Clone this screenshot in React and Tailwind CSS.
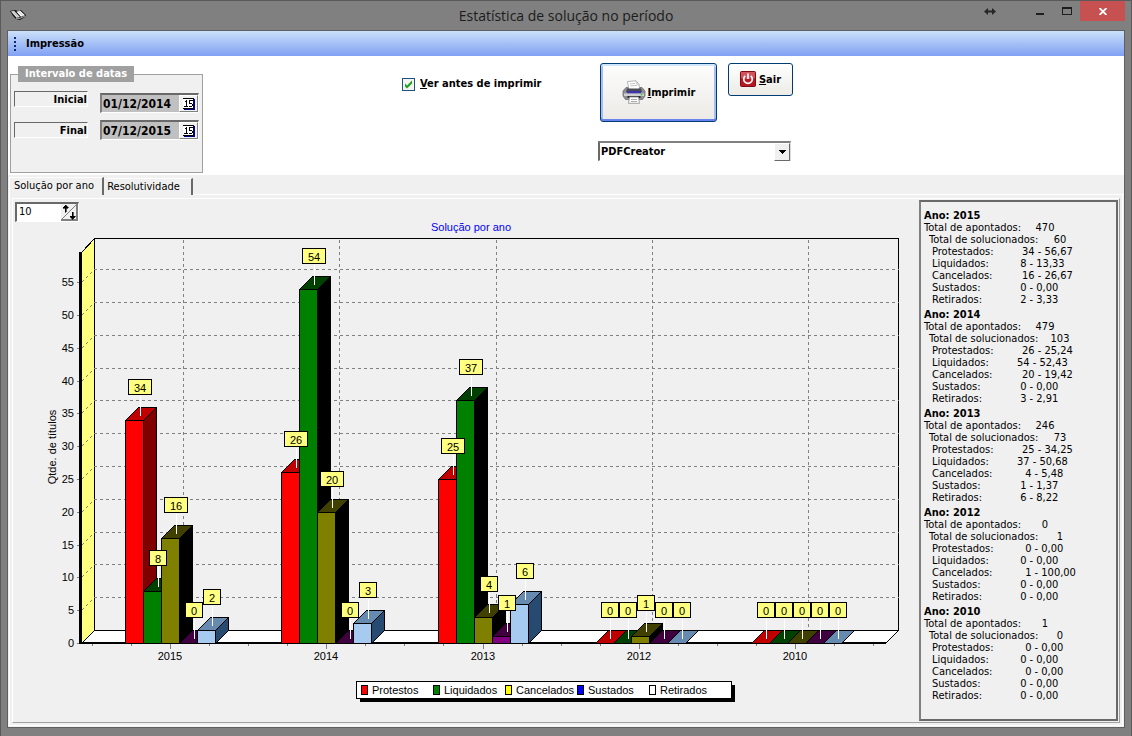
import React from 'react';

const series = [
  { name: 'Protestos', front: '#ff0000', top: '#c00000', side: '#800000', key: '#ff0000' },
  { name: 'Liquidados', front: '#008000', top: '#004000', side: '#000000', key: '#008000' },
  { name: 'Cancelados', front: '#808000', top: '#404000', side: '#000000', key: '#ffff00' },
  { name: 'Sustados', front: '#800080', top: '#400040', side: '#000000', key: '#0000ff' },
  { name: 'Retirados', front: '#a6caf0', top: '#668ab0', side: '#264a70', key: '#ffffff' },
];

const groups = [
  { year: 2015, x: 125, values: [34, 8, 16, 0, 2] },
  { year: 2014, x: 281, values: [26, 54, 20, 0, 3] },
  { year: 2013, x: 438, values: [25, 37, 4, 1, 6] },
  { year: 2012, x: 595, values: [0, 0, 1, 0, 0] },
  { year: 2010, x: 751, values: [0, 0, 0, 0, 0] },
];

const summary = [
  { year: 2015, total: 470, solved: 60, rows: ['34 - 56,67', '8 - 13,33', '16 - 26,67', '0 - 0,00', '2 - 3,33'] },
  { year: 2014, total: 479, solved: 103, rows: ['26 - 25,24', '54 - 52,43', '20 - 19,42', '0 - 0,00', '3 - 2,91'] },
  { year: 2013, total: 246, solved: 73, rows: ['25 - 34,25', '37 - 50,68', '4 - 5,48', '1 - 1,37', '6 - 8,22'] },
  { year: 2012, total: 0, solved: 1, rows: ['0 - 0,00', '0 - 0,00', '1 - 100,00', '0 - 0,00', '0 - 0,00'] },
  { year: 2010, total: 1, solved: 0, rows: ['0 - 0,00', '0 - 0,00', '0 - 0,00', '0 - 0,00', '0 - 0,00'] },
];

const rowLabels = ['Protestados:', 'Liquidados:', 'Cancelados:', 'Sustados:', 'Retirados:'];

const BASE = 643;
const DEPTH = 13;
const yOf = (v) => Math.round(BASE - v * 6.56);

function Bar({ x, value, s }) {
  const t = yOf(value);
  return (
    <g stroke="#000" strokeWidth="1">
      <polygon points={`${x},${t} ${x + DEPTH},${t - DEPTH} ${x + 18 + DEPTH},${t - DEPTH} ${x + 18},${t}`} fill={s.top} />
      {value > 0 && (
        <>
          <polygon
            points={`${x + 18},${t} ${x + 18 + DEPTH},${t - DEPTH} ${x + 18 + DEPTH},${BASE - DEPTH} ${x + 18},${BASE}`}
            fill={s.side}
          />
          <rect x={x} y={t} width="18" height={BASE - t} fill={s.front} />
        </>
      )}
    </g>
  );
}

function Mark({ x, value }) {
  const t = yOf(value);
  const w = value > 9 ? 23 : 17;
  const c = x + 15;
  return (
    <g>
      <line x1={c} x2={c} y1={t - 25} y2={t - 5} stroke="#fff" />
      <rect x={c - (w + 1) / 2} y={t - 41} width={w} height="15" fill="#ffff80" stroke="#000" />
      <text x={c - 0.5} y={t - 29} textAnchor="middle" fill="#000">{value}</text>
    </g>
  );
}

function Chart() {
  const ticks = [0, 5, 10, 15, 20, 25, 30, 35, 40, 45, 50, 55];
  const minor = [];
  for (let i = 1; i < 48; i++) if (i % 4) minor.push(Math.round(BASE - i * 8.2));
  const bottomTicks = [];
  for (let i = 0; i < 21; i++) bottomTicks.push(Math.round(92 + i * 39.05));
  return (
    <svg viewBox="13 222 906 500" className="block w-full font-['Liberation_Sans',Arial,sans-serif] text-[11px]" role="img" aria-label="Solução por ano">
      <g transform="translate(0.5 0.5)" shapeRendering="crispEdges" fill="none">
        <polygon points="81,643 94,630 898,630 885,643" fill="#fff" stroke="#000" />
        <polygon points="81,252 94,238 94,630 81,643" fill="#ffff80" stroke="#000" />
        <polyline points="94,238 898,238 898,630" stroke="#000" />
        <g stroke="#808080" strokeDasharray="3 3">
          {ticks.slice(1).map((v) => (
            <polyline key={v} points={`81,${yOf(v)} 94,${yOf(v) - DEPTH} 898,${yOf(v) - DEPTH}`} />
          ))}
          {[183, 339, 496, 652, 808].map((x) => (
            <line key={x} x1={x} x2={x} y1="239" y2="630" />
          ))}
        </g>
        <g stroke="#808080">
          {ticks.map((v) => <line key={v} x1="76" x2="80" y1={yOf(v)} y2={yOf(v)} />)}
          {minor.map((y) => <line key={y} x1="78" x2="80" y1={y} y2={y} />)}
          {bottomTicks.map((x, i) => <line key={x} x1={x} x2={x} y1="643" y2={i % 4 === 2 ? 648 : 645} />)}
        </g>
        <rect x="78.5" y="251.5" width="2" height="392" fill="#000" />
        <rect x="78.5" y="641.5" width="807" height="2" fill="#000" />
        {groups.map((g) => (
          <g key={g.year}>
            {g.values.map((v, i) => <Bar key={i} x={g.x + i * 18} value={v} s={series[i]} />)}
          </g>
        ))}
        {groups.map((g) => (
          <g key={g.year}>
            {g.values.map((v, i) => <Mark key={i} x={g.x + i * 18} value={v} />)}
          </g>
        ))}
      </g>
      <g fill="#000">
        {ticks.map((v) => <text key={v} x="74" y={yOf(v) + 4} textAnchor="end">{v}</text>)}
        {groups.map((g, i) => <text key={g.year} x={170 + Math.round(i * 156.3)} y="660" textAnchor="middle">{g.year}</text>)}
        <text x="471" y="231" textAnchor="middle" fill="#0000ff">Solução por ano</text>
        <text transform="translate(56 447) rotate(-90)" textAnchor="middle">Qtde. de títulos</text>
      </g>
      <g shapeRendering="crispEdges">
        <rect x="360" y="685" width="375" height="17" fill="#000" />
        <rect x="356.5" y="681.5" width="375" height="17" fill="#fff" stroke="#000" />
        {series.map((s, i) => (
          <g key={s.name}>
            <rect x={361.5 + i * 72} y="685.5" width="6" height="9" fill={s.key} stroke="#000" />
            <text x={372 + i * 72} y="694" fill="#000">{s.name}</text>
          </g>
        ))}
      </g>
    </svg>
  );
}

function DateLabel({ id, children }) {
  return (
    <label htmlFor={id} className="h-4 w-[74px] border border-t-[#696969] border-l-[#696969] border-r-white border-b-white text-right leading-4">
      {children}
    </label>
  );
}

function DateField({ id, value }) {
  return (
    <div className="flex h-5 w-[99px] border border-t-2 border-l-2 border-t-[#696969] border-l-[#808080] border-r-white border-b-white bg-[#c0c0c0]">
      <input id={id} defaultValue={value} className="w-[77px] bg-transparent pl-px text-[12px] leading-4 outline-none" />
      <button type="button" aria-label="Abrir calendário" className="flex flex-1 items-center justify-center border border-t-white border-l-white border-r-[#808080] border-b-[#808080] bg-[#f0f0f0]">
        <svg width="12" height="12" viewBox="0 0 12 12" shapeRendering="crispEdges">
          <path d="M1 1h11v11H1z" fill="#000080" />
          <path d="M0 1h10v9H0z" fill="#fff" />
          <path d="M0 0h11v1H0zM0 10h10v1H0z" fill="#000" />
          <path d="M2 3h1V2h1v6h1v1H1V8h2V4H2zM6 2h4v1H7v2h2v1h1v2H9v1H6V8h3V6H6z" fill="#000" />
        </svg>
      </button>
    </div>
  );
}

export default function App() {
  return (
    <div className="flex min-h-screen flex-col border border-[#5a5a5a] bg-[#808080] font-['DejaVu_Sans_Condensed','DejaVu_Sans',Tahoma,sans-serif] text-[11px] text-black">
      <header className="grid h-[29px] grid-cols-[1fr_auto_1fr] items-start">
        <svg className="mt-2 ml-2" width="18" height="12" viewBox="0 0 18 12">
          <path d="M1 2l5-1 3 1 3-1 5 5-1 2-5 3-4-1-3-3z" fill="#111" />
          <path d="M2 2.5l3-.8 6 6.3-3.5.8z" fill="#e4e4e4" />
          <path d="M7.5 2.8l3.5-1.2 5 4.6-4 1.6z" fill="#fafafa" />
          <path d="M9.5 2.2l4.6 4.6M3.8 2.2l5.6 6" stroke="#999" strokeWidth="0.6" />
          <path d="M7 9.3h4l5-2.2" stroke="#ddd" strokeWidth="0.8" fill="none" />
        </svg>
        <h1 className="font-['Open_Sans','Noto_Sans',sans-serif] text-[14px] leading-[30px] text-[#1c1c1c]">Estatística de solução no período</h1>
        <div className="flex justify-end pr-1.5">
          <button type="button" aria-label="Redimensionar" className="mr-8 h-5 w-3">
            <svg width="12" height="7" viewBox="0 0 12 7" fill="#262626"><path d="M0 3.5L4 0v2.5h4V0l4 3.5L8 7V4.5H4V7z" /></svg>
          </button>
          <button type="button" aria-label="Minimizar" className="h-5 w-6 pt-1.5"><span className="mx-auto block h-0.5 w-2 bg-[#1e1e1e]" /></button>
          <button type="button" aria-label="Maximizar" className="mr-px ml-[3px] h-5 w-6"><span className="mx-auto block h-2 w-2.5 border border-t-2 border-[#1e1e1e]" /></button>
          <button type="button" aria-label="Fechar" className="flex h-5 w-[45px] items-center justify-center bg-[#c75050]">
            <svg width="8" height="7" viewBox="0 0 8 7" stroke="#fff" strokeWidth="1.8"><path d="M0.5 0l7 7M7.5 0l-7 7" /></svg>
          </button>
        </div>
      </header>

      <main className="mx-1.5 mb-2 flex flex-1 flex-col border border-[#606060] bg-[#f0f0f0]">
        <div className="flex h-[25px] items-center gap-2.5 bg-linear-to-b from-[#cbe0f8] to-[#81a0f3] pl-1.5 font-bold">
          <span className="h-[14px] border-l-2 border-dotted border-[#0c2a70]" />
          <h2 className="pt-0.5">Impressão</h2>
        </div>

        <form className="flex items-start bg-white pt-2.5 pb-0.5 pl-0.5 font-bold" onSubmit={(e) => e.preventDefault()}>
          <fieldset className="h-[107px] w-[193px] border border-[#a0a0a0] bg-[#f0f0f0] px-[3px]">
            <legend className="ml-1 h-4 bg-[#a0a0a0] px-[7px] leading-4 text-white">Intervalo de datas</legend>
            <div className="flex gap-3">
              <div className="mt-[9px] flex flex-col gap-[15px]">
                <DateLabel id="inicial">Inicial</DateLabel>
                <DateLabel id="final">Final</DateLabel>
              </div>
              <div className="mt-[11px] flex flex-col gap-[7px]">
                <DateField id="inicial" value="01/12/2014" />
                <DateField id="final" value="07/12/2015" />
              </div>
            </div>
          </fieldset>

          <label className="mt-2.5 ml-[199px] flex w-[196px] items-center gap-[5px]">
            <span className="relative h-[13px] w-[13px]">
              <input type="checkbox" defaultChecked className="peer block h-[13px] w-[13px] appearance-none border border-[#1c5180] bg-[#f3f3ef]" />
              <svg className="pointer-events-none absolute inset-0 hidden peer-checked:block" width="13" height="13" viewBox="0 0 13 13">
                <path d="M3 5.5v3l2 2 5-5v-3l-5 5z" fill="#21a121" />
              </svg>
            </span>
            <span><u>V</u>er antes de imprimir</span>
          </label>

          <div>
            <div className="mt-[-3px] flex items-start gap-[11px] pl-0.5">
              <button type="submit" className="flex h-[59px] w-[117px] items-center justify-center gap-0.5 rounded-[3px] border border-[#003c74] bg-linear-to-b from-[#fdfdfd] to-[#eceae6] shadow-[inset_0_2px_#cee7ff,inset_0_-2px_#6982ee,inset_2px_0_#a5bff5,inset_-2px_0_#a5bff5]">
                <svg className="mb-0.5" width="24" height="24" viewBox="0 0 24 24">
                  <path d="M7 10L5.5 1.5 14 .8l3 3.4.8 5.8z" fill="#fff" stroke="#b4b4b4" />
                  <path d="M14 .8l.4 3.2 2.6.2M8 4l5-.5M8.3 6l7-.6" stroke="#c4c4c4" fill="none" />
                  <path d="M1 11l3-3.5h2L7 11h10l1-3.5h2l3 3.500v5l-2.500 3.500h-17L1 16z" fill="#8d8d92" stroke="#6c6c6c" strokeWidth="0.8" />
                  <path d="M5 8.500h14l1 3.500H4z" fill="#4a4a55" />
                  <path d="M5 11h14v2.500H5z" fill="#3d35a8" />
                  <path d="M2 13.500h20v2.500H2z" fill="#d0d0d3" />
                  <path d="M5.500 16h13v2h-13z" fill="#2b2b2b" />
                  <path d="M7.500 17h9l1 6.300h-11z" fill="#fff" stroke="#8a8a8a" strokeWidth="0.8" />
                  <path d="M9 19.500h6M9 21.500h6" stroke="#aaa" />
                  <circle cx="19.5" cy="14.5" r="0.9" fill="#3c3" />
                </svg>
                <span className="pt-0.5"><u>I</u>mprimir</span>
              </button>
              <button type="button" className="flex h-[33px] w-[65px] items-center justify-center gap-[3px] rounded-[3px] border border-[#003c74] bg-linear-to-b from-white to-[#ecebe5]">
                <svg className="mb-0.5" width="16" height="16" viewBox="0 0 16 16">
                  <rect x="0.5" y="0.5" width="15" height="15" rx="1" fill="#b51a22" stroke="#7a0c12" />
                  <path d="M1 1h14v6q-7 2-14 0z" fill="#d2535a" />
                  <path d="M5.2 4.800a4.300 4.300 0 1 0 5.600 0M8 2.500v5.500" fill="none" stroke="#fff" strokeWidth="1.7" />
                </svg>
                <span className="pt-0.5"><u>S</u>air</span>
              </button>
            </div>
            <div className="mt-[19px] grid h-5 w-[193px] border border-t-2 border-l-2 border-t-[#808080] border-l-[#696969] border-r-[#dcdcdc] border-b-[#dcdcdc]">
              <select aria-label="Impressora" className="col-start-1 row-start-1 appearance-none bg-white pt-px pl-px font-bold outline-none">
                <option>PDFCreator</option>
              </select>
              <span className="pointer-events-none col-start-1 row-start-1 flex w-4 items-center justify-center justify-self-end border border-t-white border-l-white border-r-[#696969] border-b-[#696969] bg-[#f0f0f0]">
                <svg width="7" height="4" viewBox="0 0 7 4" shapeRendering="crispEdges"><path d="M0 0h7L3.5 4z" /></svg>
              </span>
            </div>
          </div>
        </form>

        <div className="flex h-5 items-end pl-px" role="tablist">
          <button type="button" role="tab" aria-selected="true" className="h-[18px] w-[95px] border-t border-l border-r-2 border-t-white border-l-white border-r-[#696969] pr-1 pb-0.5 leading-3">Solução por ano</button>
          <button type="button" role="tab" aria-selected="false" className="h-[17px] w-[89px] border-t border-r-2 border-t-white border-r-[#696969] pr-2 leading-3">Resolutividade</button>
          <span className="flex-1 self-stretch border-b border-white" />
        </div>

        <section className="mx-px mb-px flex flex-1 border-r border-b border-l border-white pt-[3px] pr-0.5 pb-0.5 pl-0.5">
          <div className="flex flex-1 border border-t-white border-l-white border-r-[#a0a0a0] border-b-[#a0a0a0]">
            <div className="min-w-0 flex-1 pt-[3px]">
              <div className="ml-0.5 flex h-5 w-16 border border-t-2 border-l-2 border-t-[#696969] border-l-[#696969] border-r-white border-b-white bg-white">
                <input aria-label="Quantidade" defaultValue="10" className="w-11 pl-0.5 outline-none" />
                <button type="button" aria-label="Ajustar quantidade" className="flex-1 bg-[#f0f0f0]">
                  <svg width="17" height="17" viewBox="0 0 17 17" shapeRendering="crispEdges">
                    <path d="M0 16h16V0" fill="none" stroke="#808080" strokeWidth="2" />
                    <path d="M1 15L15 1" stroke="#808080" />
                    <path d="M4 1h1v1h1v1h1v1H5v4H4V4H2V3h1V2h1z" stroke="#000" strokeWidth="0.6" />
                    <path d="M11 8h1v4h2v1h-1v1h-1v1h-1v-1h-1v-1H9v-1h2z" stroke="#000" strokeWidth="0.6" />
                  </svg>
                </button>
              </div>
              <Chart />
            </div>
            <aside className="mt-px mr-px mb-px w-[199px] border-2 border-t-[#696969] border-r-[#696969] border-b-[#696969] border-l-[#808080] pt-2 pl-[3px] leading-3">
              {summary.map((s) => (
                <section key={s.year} className="mb-[3px]">
                  <h3 className="font-bold">Ano: {s.year}</h3>
                  <dl className="whitespace-pre">
                    <div className="flex"><dt className="w-[104px]">Total de apontados:</dt><dd className="w-[34px] text-center">{s.total}</dd></div>
                    <div className="flex pl-[5px]"><dt className="w-[114px]">Total de solucionados:</dt><dd className="w-[34px] text-center">{s.solved}</dd></div>
                    {s.rows.map((r, i) => (
                      <div key={i} className="flex pl-2">
                        <dt className={i % 2 === 0 && i < 4 ? 'w-[90px]' : 'w-[85px]'}>{rowLabels[i]}</dt>
                        <dd>{r[1] === ' ' ? ' ' + r : r}</dd>
                      </div>
                    ))}
                  </dl>
                </section>
              ))}
            </aside>
          </div>
        </section>
      </main>
    </div>
  );
}
